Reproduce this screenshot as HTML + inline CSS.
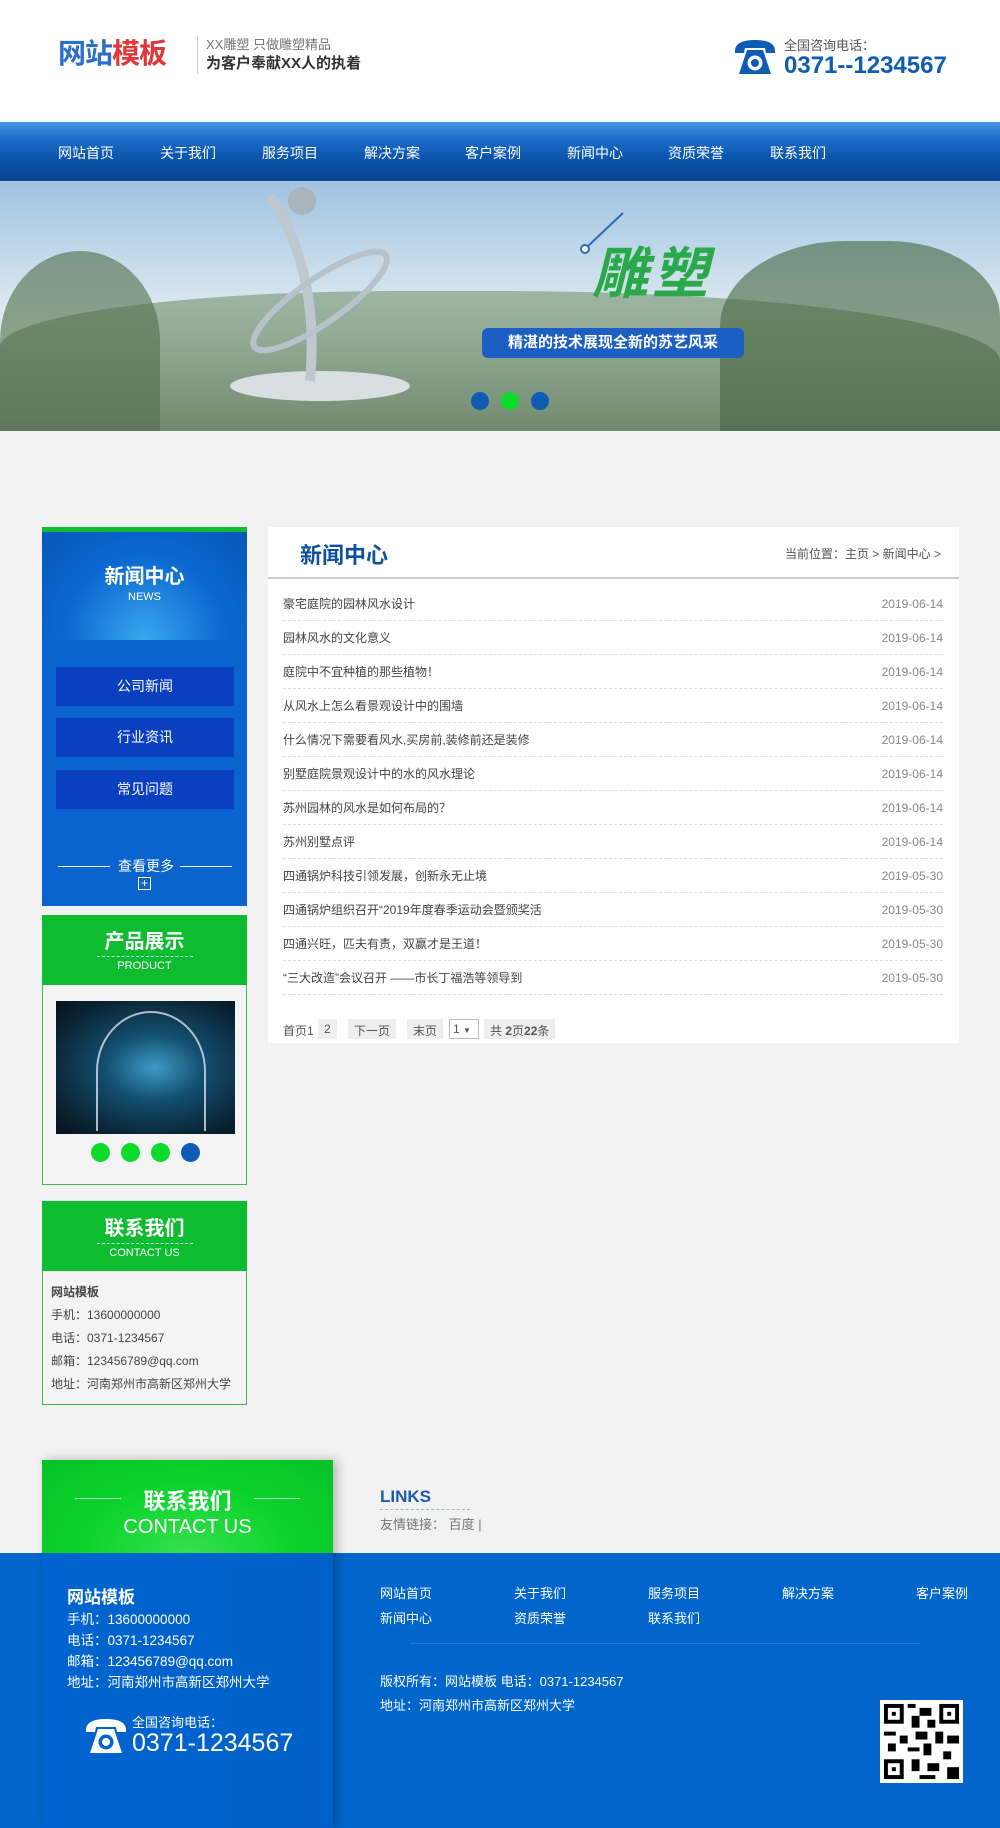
<!DOCTYPE html>
<html><head><meta charset="utf-8"><style>
*{margin:0;padding:0;box-sizing:border-box}
body{width:1000px;height:1828px;background:#f2f2f2;font-family:"Liberation Sans","Noto Sans CJK SC",sans-serif;position:relative;overflow:hidden;color:#333}
.a{position:absolute;white-space:nowrap}
#hdr{position:absolute;left:0;top:0;width:1000px;height:122px;background:#fff}
#nav{position:absolute;left:0;top:122px;width:1000px;height:59px;background:linear-gradient(#4a98e8 0%,#1f6fcc 25%,#0c55ad 60%,#0a4590 100%)}
#nav span{position:absolute;top:21px;color:#fff;font-size:14px}
#ban{position:absolute;left:0;top:181px;width:1000px;height:250px;overflow:hidden;background:linear-gradient(#9fc3e0 0%,#d4e4ee 45%,#e6edf0 60%,#c5d3cf 100%)}
.side{position:absolute;left:42px;width:205px}
.gh{background:#0dbd2f;color:#fff;text-align:center}
.row{position:absolute;left:283px;width:660px;height:34px;border-bottom:1px dashed #ddd;font-size:12px;color:#444}
.row b{font-weight:normal;position:absolute;left:0;top:10px;line-height:14px}
.row i{font-style:normal;position:absolute;right:0;top:10px;line-height:14px;color:#888}
.pg{position:absolute;top:1019px;height:20px;font-size:12px;color:#555;background:#eee;padding:3px 6px}
.fl{position:absolute;color:#fff;font-size:13px}
</style></head><body>
<div id="hdr">
 <div class="a" style="left:58px;top:40px;font-size:28px;line-height:1;font-weight:bold;letter-spacing:-1px"><span style="color:#2c6fc9">网站</span><span style="color:#e0383a">模板</span></div>
 <div class="a" style="left:197px;top:36px;width:1px;height:38px;background:#ccc"></div>
 <div class="a" style="left:206px;top:38px;font-size:13px;line-height:1;color:#777">XX雕塑 只做雕塑精品</div>
 <div class="a" style="left:206px;top:56px;font-size:15px;line-height:1;font-weight:bold;color:#333">为客户奉献XX人的执着</div>
 <svg class="a" style="left:733px;top:38px" width="44" height="38" viewBox="0 0 44 38"><path d="M2 12 Q3 2 22 2 Q41 2 42 12 L42 15 L33 15 L32 10 L12 10 L11 15 L2 15Z" fill="#0e5cb4"/><path d="M14 12 L30 12 L38 36 L6 36Z" fill="#0e5cb4"/><circle cx="22" cy="25" r="7.5" fill="#fff"/><circle cx="22" cy="25" r="4" fill="#0e5cb4"/></svg>
 <div class="a" style="left:784px;top:39px;font-size:13px;line-height:1;color:#555">全国咨询电话：</div>
 <div class="a" style="left:784px;top:54px;font-size:24px;line-height:1;font-weight:bold;color:#0e5cb4">0371--1234567</div>
</div>
<div id="nav"><span style="left:58px">网站首页</span><span style="left:160px">关于我们</span><span style="left:262px">服务项目</span><span style="left:364px">解决方案</span><span style="left:465px">客户案例</span><span style="left:567px">新闻中心</span><span style="left:668px">资质荣誉</span><span style="left:770px">联系我们</span></div>
<div id="ban">
 <div class="a" style="left:0;top:110px;width:1000px;height:140px;background:linear-gradient(#8aa58a,#55724f);opacity:.75;border-radius:40% 50% 0 0"></div>
 <div class="a" style="left:0;top:70px;width:160px;height:180px;background:#4f6e48;opacity:.6;border-radius:50% 50% 0 0"></div>
 <div class="a" style="left:720px;top:60px;width:280px;height:190px;background:#456640;opacity:.6;border-radius:45% 40% 0 0"></div>
 <div class="a" style="left:230px;top:190px;width:180px;height:30px;background:#d8dfe2;border-radius:50%"></div>
 <svg class="a" style="left:240px;top:0" width="170" height="210"><circle cx="62" cy="20" r="14" fill="#aab4bc"/><path d="M30 15 Q80 90 70 200" stroke="#c0c8cf" stroke-width="10" fill="none"/><ellipse cx="80" cy="120" rx="80" ry="22" transform="rotate(-35 80 120)" stroke="#b8c2ca" stroke-width="6" fill="none"/></svg>
 <svg class="a" style="left:575px;top:30px" width="50" height="45"><line x1="48" y1="2" x2="12" y2="36" stroke="#2a6bc0" stroke-width="2"/><circle cx="10" cy="38" r="4" stroke="#2a6bc0" stroke-width="2" fill="#fff"/></svg>
 <div class="a" style="left:592px;top:48px;font-size:56px;font-weight:bold;color:#2aa84a;font-style:italic;letter-spacing:4px">雕塑</div>
 <div class="a" style="left:482px;top:147px;width:262px;height:30px;background:#1c5fc2;border-radius:6px;color:#fff;font-size:15px;font-weight:bold;text-align:center;line-height:30px">精湛的技术展现全新的苏艺风采</div>
 <div class="a" style="left:471px;top:211px;width:18px;height:18px;border-radius:50%;background:#0e5cb4"></div>
 <div class="a" style="left:501px;top:211px;width:18px;height:18px;border-radius:50%;background:#0cdb2c"></div>
 <div class="a" style="left:531px;top:211px;width:18px;height:18px;border-radius:50%;background:#0e5cb4"></div>
</div>

<div class="side" style="top:527px;height:379px;background:#0a63cf;border-top:5px solid #0dbd2f">
 <div style="height:108px;background:radial-gradient(ellipse at 50% 100%,#39a8ef 0%,#0b68d0 55%,#0756b8 100%);color:#fff;text-align:center;padding-top:28px"><div style="font-size:20px;font-weight:bold">新闻中心</div><div style="font-size:11px;margin-top:2px">NEWS</div></div>
 <div class="a" style="left:14px;top:135px;width:178px;height:39px;background:#0a3fbf;color:#fff;font-size:14px;text-align:center;line-height:39px">公司新闻</div>
 <div class="a" style="left:14px;top:186px;width:178px;height:39px;background:#0a3fbf;color:#fff;font-size:14px;text-align:center;line-height:39px">行业资讯</div>
 <div class="a" style="left:14px;top:238px;width:178px;height:39px;background:#0a3fbf;color:#fff;font-size:14px;text-align:center;line-height:39px">常见问题</div>
 <div class="a" style="left:16px;top:334px;width:52px;height:1px;background:#fff"></div><div class="a" style="left:138px;top:334px;width:52px;height:1px;background:#fff"></div>
 <div class="a" style="left:76px;top:324px;color:#fff;font-size:14px">查看更多</div>
 <div class="a" style="left:96px;top:345px;width:13px;height:13px;border:1px solid #fff;color:#fff;font-size:12px;line-height:10px;text-align:center">+</div>
</div>
<div class="side" style="top:915px;height:270px;border:1px solid #3db84f;background:#f4f4f4">
 <div class="gh" style="height:70px;padding-top:10px;margin:-1px -1px 0"><div style="font-size:20px;font-weight:bold">产品展示</div><div style="width:96px;margin:2px auto 0;border-top:1px dashed #bfe"></div><div style="font-size:11px;margin-top:3px">PRODUCT</div></div>
 <div class="a" style="left:13px;top:85px;width:179px;height:133px;background:radial-gradient(ellipse at 55% 50%,#3d9bc4 0%,#134f70 35%,#0a2535 75%,#06121a 100%)"><div class="a" style="left:40px;top:10px;width:110px;height:120px;border:2px solid #dde;border-radius:50% 50% 0 0;border-bottom:none;opacity:.8"></div></div>
 <div class="a" style="left:48px;top:227px;width:19px;height:19px;border-radius:50%;background:#0cdb2c"></div>
 <div class="a" style="left:78px;top:227px;width:19px;height:19px;border-radius:50%;background:#0cdb2c"></div>
 <div class="a" style="left:108px;top:227px;width:19px;height:19px;border-radius:50%;background:#0cdb2c"></div>
 <div class="a" style="left:138px;top:227px;width:19px;height:19px;border-radius:50%;background:#0e5cb4"></div>
</div>
<div class="side" style="top:1201px;height:204px;border:1px solid #3db84f;background:#f4f4f4">
 <div class="gh" style="height:70px;padding-top:11px;margin:-1px -1px 0"><div style="font-size:20px;font-weight:bold">联系我们</div><div style="width:96px;margin:2px auto 0;border-top:1px dashed #bfe"></div><div style="font-size:11px;margin-top:3px">CONTACT US</div></div>
 <div style="padding:10px 0 0 8px;font-size:12px;color:#444;line-height:23px"><div style="font-weight:bold">网站模板</div><div>手机：13600000000</div><div>电话：0371-1234567</div><div>邮箱：123456789@qq.com</div><div>地址：河南郑州市高新区郑州大学</div></div>
</div>

<div class="a" style="left:268px;top:527px;width:691px;height:516px;background:#fff">
 <div class="a" style="left:0;top:50px;width:691px;height:2px;background:#ccc"></div>
 <div class="a" style="left:32px;top:11px;font-size:22px;font-weight:bold;color:#0e4fa0">新闻中心</div>
 <div class="a" style="right:18px;top:18px;font-size:12px;color:#555">当前位置：主页 &gt; 新闻中心 &gt;</div>
</div>
<div class="row" style="top:587px"><b>豪宅庭院的园林风水设计</b><i>2019-06-14</i></div>
<div class="row" style="top:621px"><b>园林风水的文化意义</b><i>2019-06-14</i></div>
<div class="row" style="top:655px"><b>庭院中不宜种植的那些植物！</b><i>2019-06-14</i></div>
<div class="row" style="top:689px"><b>从风水上怎么看景观设计中的围墙</b><i>2019-06-14</i></div>
<div class="row" style="top:723px"><b>什么情况下需要看风水,买房前,装修前还是装修</b><i>2019-06-14</i></div>
<div class="row" style="top:757px"><b>别墅庭院景观设计中的水的风水理论</b><i>2019-06-14</i></div>
<div class="row" style="top:791px"><b>苏州园林的风水是如何布局的？</b><i>2019-06-14</i></div>
<div class="row" style="top:825px"><b>苏州别墅点评</b><i>2019-06-14</i></div>
<div class="row" style="top:859px"><b>四通锅炉科技引领发展，创新永无止境</b><i>2019-05-30</i></div>
<div class="row" style="top:893px"><b>四通锅炉组织召开“2019年度春季运动会暨颁奖活</b><i>2019-05-30</i></div>
<div class="row" style="top:927px"><b>四通兴旺，匹夫有责，双赢才是王道！</b><i>2019-05-30</i></div>
<div class="row" style="top:961px"><b>“三大改造”会议召开 ——市长丁福浩等领导到</b><i>2019-05-30</i></div>
<div class="a" style="left:283px;top:1022px;font-size:12px;color:#555">首页1</div>
<div class="pg" style="left:318px">2</div>
<div class="pg" style="left:348px">下一页</div>
<div class="pg" style="left:407px">末页</div>
<div class="a" style="left:449px;top:1019px;width:30px;height:20px;border:1px solid #bbb;background:#fff;font-size:12px;color:#555;padding:2px 3px">1 <span style="font-size:8px">▼</span></div>
<div class="pg" style="left:484px">共 <b>2</b>页<b>22</b>条</div>

<div class="a" style="left:0;top:1553px;width:1000px;height:275px;background:#0066cc"></div>
<div class="a" style="left:42px;top:1460px;width:291px;height:368px;background:linear-gradient(90deg,#0064d0,#0060c8);box-shadow:4px 0 10px rgba(0,0,0,.25)"></div>
<div class="a" style="left:42px;top:1460px;width:291px;height:93px;background:radial-gradient(ellipse at 50% 100%,#37e04f,#0bd42c 50%,#06c227);text-align:center;color:#fff">
 <div class="a" style="left:33px;top:38px;width:46px;height:1px;background:#aef0b8"></div><div class="a" style="left:212px;top:38px;width:46px;height:1px;background:#aef0b8"></div>
 <div style="font-size:22px;font-weight:bold;margin-top:24px">联系我们</div><div style="font-size:20px">CONTACT US</div></div>
<div class="a" style="left:380px;top:1487px;font-size:17px;font-weight:bold;color:#1d5aa8">LINKS</div>
<div class="a" style="left:380px;top:1509px;width:90px;border-top:1px dashed #9bb"></div>
<div class="a" style="left:380px;top:1514px;font-size:13px;color:#777">友情链接： 百度 |</div>

<div class="a" style="left:67px;top:1583px;font-size:17px;font-weight:bold;color:#fff">网站模板</div>
<div class="a" style="left:67px;top:1609px;font-size:13.5px;color:#fff;line-height:21px">手机：13600000000<br>电话：0371-1234567<br>邮箱：123456789@qq.com<br>地址：河南郑州市高新区郑州大学</div>
<svg class="a" style="left:84px;top:1716px" width="44" height="40" viewBox="0 0 44 38"><path d="M2 12 Q3 2 22 2 Q41 2 42 12 L42 15 L33 15 L32 10 L12 10 L11 15 L2 15Z" fill="#fff"/><path d="M14 12 L30 12 L38 36 L6 36Z" fill="#fff"/><circle cx="22" cy="25" r="7.5" fill="#0064d0"/><circle cx="22" cy="25" r="4" fill="#fff"/></svg>
<div class="a" style="left:132px;top:1716px;font-size:13px;line-height:1;color:#fff">全国咨询电话：</div>
<div class="a" style="left:132px;top:1731px;font-size:25px;line-height:1;color:#fff">0371-1234567</div>

<div class="fl" style="left:380px;top:1583px">网站首页</div><div class="fl" style="left:514px;top:1583px">关于我们</div><div class="fl" style="left:648px;top:1583px">服务项目</div><div class="fl" style="left:782px;top:1583px">解决方案</div><div class="fl" style="left:916px;top:1583px">客户案例</div>
<div class="fl" style="left:380px;top:1608px">新闻中心</div><div class="fl" style="left:514px;top:1608px">资质荣誉</div><div class="fl" style="left:648px;top:1608px">联系我们</div>
<div class="a" style="left:410px;top:1643px;width:510px;height:1px;background:#2a7ad8"></div>
<div class="fl" style="left:380px;top:1671px">版权所有：网站模板 电话：0371-1234567</div>
<div class="fl" style="left:380px;top:1695px">地址：河南郑州市高新区郑州大学</div>
<svg class="a" style="left:880px;top:1700px" width="83" height="83" viewBox="0 0 21 21"><rect width="21" height="21" fill="#fff"/><g fill="#000"><rect x="1" y="1" width="5" height="5"/><rect x="15" y="1" width="5" height="5"/><rect x="1" y="15" width="5" height="5"/></g><g fill="#fff"><rect x="2" y="2" width="3" height="3"/><rect x="16" y="2" width="3" height="3"/><rect x="2" y="16" width="3" height="3"/></g><g fill="#000"><rect x="3" y="3" width="1" height="1"/><rect x="17" y="3" width="1" height="1"/><rect x="3" y="17" width="1" height="1"/><rect x="7" y="1" width="2" height="1"/><rect x="10" y="2" width="3" height="2"/><rect x="8" y="4" width="2" height="3"/><rect x="12" y="5" width="2" height="2"/><rect x="1" y="8" width="3" height="1"/><rect x="5" y="9" width="2" height="2"/><rect x="9" y="8" width="3" height="2"/><rect x="14" y="8" width="2" height="3"/><rect x="17" y="9" width="3" height="2"/><rect x="2" y="11" width="2" height="2"/><rect x="7" y="12" width="3" height="1"/><rect x="11" y="11" width="2" height="3"/><rect x="16" y="13" width="2" height="2"/><rect x="8" y="15" width="2" height="3"/><rect x="12" y="16" width="3" height="2"/><rect x="17" y="17" width="3" height="3"/><rect x="10" y="19" width="4" height="1"/></g></svg>
</body></html>
